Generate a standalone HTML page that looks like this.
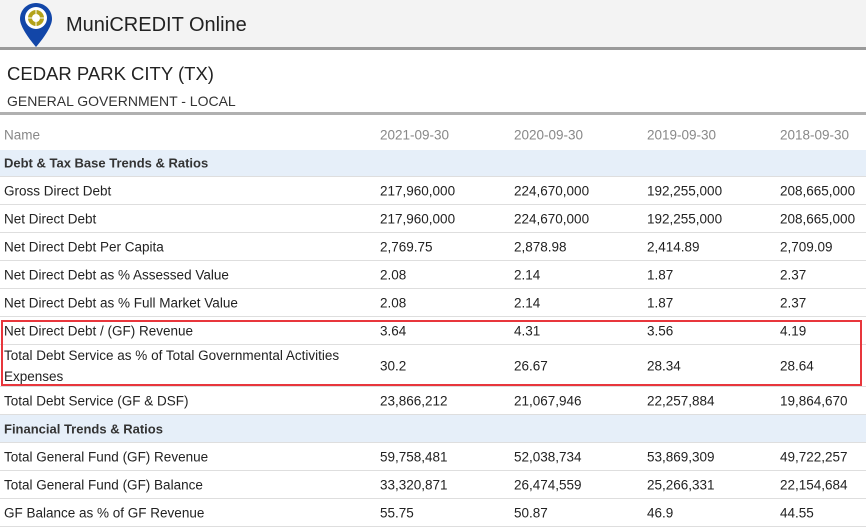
<!DOCTYPE html>
<html><head><style>
*{margin:0;padding:0;box-sizing:border-box}
body{width:866px;height:526px;overflow:hidden;background:#fff;font-family:"Liberation Sans",sans-serif;color:#222;position:relative}
.hdr{position:absolute;left:0;top:0;width:866px;height:50px;background:#f3f3f3;border-bottom:3px solid #9a9a9a}
.hdr .t{position:absolute;left:66px;top:14px;font-size:20px;color:#222}
.ttl{position:absolute;left:7px;top:63px;font-size:18.5px;color:#222}
.sub{position:absolute;left:7px;top:93px;font-size:14px;color:#333}
.sep{position:absolute;left:0;top:112px;width:866px;height:3px;background:#b0b0b0}
.row{position:absolute;left:0;width:866px;border-bottom:1px solid #dedede;font-size:13.5px}
.row span{position:absolute;top:50%;transform:translateY(-50%)}
.row .n{left:4px}
.c1{left:380px}.c2{left:514px}.c3{left:647px}.c4{left:780px}
.h{color:#888;font-size:13.5px}
.s{background:#e6eff9}
.s .n{font-weight:bold;font-size:13px;color:#333}
.box{position:absolute;left:1px;top:320px;width:861px;height:66px;border:2px solid #e8363c}
</style></head><body>
<div class="hdr">
<svg style="position:absolute;left:19px;top:2px" width="34" height="46" viewBox="0 0 34 46"><path d="M17 1C8 1 1 8 1 17c0 10 16 28 16 28s16-18 16-28C33 8 26 1 17 1z" fill="#1246a8"/><circle cx="17" cy="16" r="11" fill="#fff"/><circle cx="17" cy="16" r="8" fill="#b3a21a"/><circle cx="17" cy="16" r="4" fill="#fff"/><path d="M9 16h16M17 8v16" stroke="#fff" stroke-width="1"/></svg>
<div class="t">MuniCREDIT Online</div></div>
<div class="ttl">CEDAR PARK CITY (TX)</div>
<div class="sub">GENERAL GOVERNMENT - LOCAL</div>
<div class="sep"></div>
<div class="row h" style="top:120px;height:30px;border-bottom:none"><span class="n">Name</span><span class="c1">2021-09-30</span><span class="c2">2020-09-30</span><span class="c3">2019-09-30</span><span class="c4">2018-09-30</span></div>
<div class="row s" style="top:150px;height:27px"><span class="n">Debt &amp; Tax Base Trends &amp; Ratios</span></div>
<div class="row" style="top:177px;height:28px"><span class="n">Gross Direct Debt</span><span class="c1">217,960,000</span><span class="c2">224,670,000</span><span class="c3">192,255,000</span><span class="c4">208,665,000</span></div>
<div class="row" style="top:205px;height:28px"><span class="n">Net Direct Debt</span><span class="c1">217,960,000</span><span class="c2">224,670,000</span><span class="c3">192,255,000</span><span class="c4">208,665,000</span></div>
<div class="row" style="top:233px;height:28px"><span class="n">Net Direct Debt Per Capita</span><span class="c1">2,769.75</span><span class="c2">2,878.98</span><span class="c3">2,414.89</span><span class="c4">2,709.09</span></div>
<div class="row" style="top:261px;height:28px"><span class="n">Net Direct Debt as % Assessed Value</span><span class="c1">2.08</span><span class="c2">2.14</span><span class="c3">1.87</span><span class="c4">2.37</span></div>
<div class="row" style="top:289px;height:28px"><span class="n">Net Direct Debt as % Full Market Value</span><span class="c1">2.08</span><span class="c2">2.14</span><span class="c3">1.87</span><span class="c4">2.37</span></div>
<div class="row" style="top:317px;height:28px"><span class="n">Net Direct Debt / (GF) Revenue</span><span class="c1">3.64</span><span class="c2">4.31</span><span class="c3">3.56</span><span class="c4">4.19</span></div>
<div class="row" style="top:345px;height:42px"><span class="n" style="line-height:21px">Total Debt Service as % of Total Governmental Activities<br>Expenses</span><span class="c1">30.2</span><span class="c2">26.67</span><span class="c3">28.34</span><span class="c4">28.64</span></div>
<div class="row" style="top:387px;height:28px"><span class="n">Total Debt Service (GF &amp; DSF)</span><span class="c1">23,866,212</span><span class="c2">21,067,946</span><span class="c3">22,257,884</span><span class="c4">19,864,670</span></div>
<div class="row s" style="top:415px;height:28px"><span class="n">Financial Trends &amp; Ratios</span></div>
<div class="row" style="top:443px;height:28px"><span class="n">Total General Fund (GF) Revenue</span><span class="c1">59,758,481</span><span class="c2">52,038,734</span><span class="c3">53,869,309</span><span class="c4">49,722,257</span></div>
<div class="row" style="top:471px;height:28px"><span class="n">Total General Fund (GF) Balance</span><span class="c1">33,320,871</span><span class="c2">26,474,559</span><span class="c3">25,266,331</span><span class="c4">22,154,684</span></div>
<div class="row" style="top:499px;height:28px"><span class="n">GF Balance as % of GF Revenue</span><span class="c1">55.75</span><span class="c2">50.87</span><span class="c3">46.9</span><span class="c4">44.55</span></div>
<div class="box"></div>
</body></html>
